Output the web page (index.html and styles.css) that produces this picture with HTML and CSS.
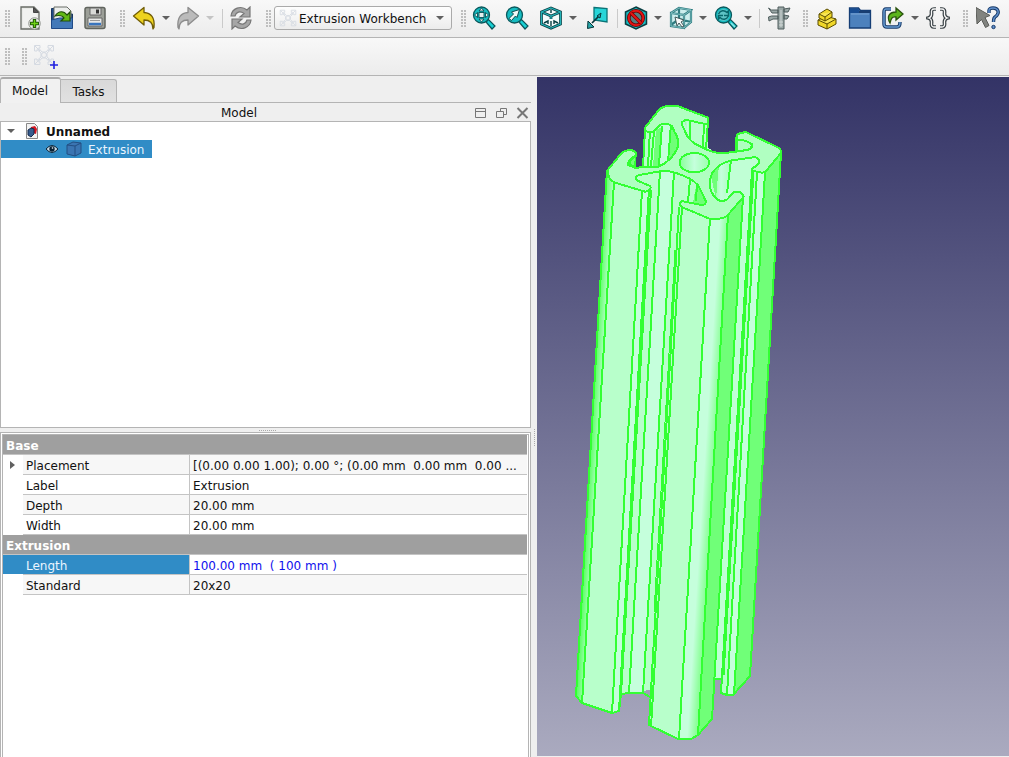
FILE: index.html
```html
<!DOCTYPE html>
<html lang="en">
<head>
<meta charset="utf-8">
<title>Extrusion Workbench</title>
<link rel="stylesheet" href="styles.css">
</head>
<body>
<div class="app">
<header class="toolbar main-bar">
  <i class="handle"></i>
  <svg class="icon" viewBox="0 0 24 24"><path d="M3 1h13l5 5v17H3z" fill="#e9eae7" stroke="#686c66" stroke-width="1.3"/><path d="M5 3h10l4 5v13H5z" fill="#f1f2f0"/><path d="M15.500 1.500v5h5z" fill="#555" stroke="#444"/><circle cx="16.500" cy="17.500" r="5.700" fill="#eef2eb" stroke="#888b85"/><path d="M16.500 13v9M12 17.500h9" stroke="#225d08" stroke-width="3.400"/><path d="M16.500 14v7M13 17.500h7" stroke="#70d316" stroke-width="1.300"/></svg>
  <svg class="icon" viewBox="0 0 24 24"><path d="M1.500 2.500h3V22H1.500z" fill="#204a87" stroke="#173761"/><path d="M20 8h2.500v6H20z" fill="#204a87" stroke="#173761"/><path d="M4 1h13l4 4v10H4z" fill="#eceeec" stroke="#686c66"/><path d="M1.500 14l8-2h13v10.500h-21z" fill="#4379b8" stroke="#204a87"/><path d="M5 10c4-6 9-5 12-1l3-3v9h-9l3-3c-2-3-5-3-9-2z" fill="#62b917" stroke="#204c0b" stroke-width="1.200"/></svg>
  <svg class="icon" viewBox="0 0 24 24"><rect x="2" y="1.500" width="20" height="21" rx="2" fill="#9c9f98" stroke="#60645e" stroke-width="1.500"/><path d="M7 2h11v7H7z" fill="#d9dad7" stroke="#666"/><path d="M13 3.500h3v4h-3z" fill="#333"/><path d="M5 12h14v8H5z" fill="#e8e9e7" stroke="#666"/><path d="M7 14.500h10" stroke="#999"/><path d="M6 18h12" stroke="#3975bd" stroke-width="2.500"/></svg>
  <i class="handle"></i>
  <svg class="icon" viewBox="0 0 24 24"><path d="M1.500 10L12 1.500v5c7 .5 11 5 10 15l-1 1.500c0-6-3-9-9-9v5z" fill="#edd21f" stroke="#715d05" stroke-width="1.300" stroke-linejoin="round"/></svg>
  <i class="drop"></i>
  <svg class="icon" viewBox="0 0 24 24"><path d="M22.500 10L12 1.500v5c-7 .5-11 5-10 15l1 1.500c0-6 3-9 9-9v5z" fill="#bbb" stroke="#8c8c8c" stroke-width="1.300" stroke-linejoin="round"/></svg>
  <i class="drop off"></i>
  <i class="sep"></i>
  <svg class="icon" viewBox="0 0 24 24"><g id="turn"><path d="M2 10c1-8 10-11 16-6l3-3v10H11l4-3.500C11 4.500 7 6 6 10z" fill="#a6a6a6" stroke="#777" stroke-width="1.200"/></g><use href="#turn" transform="rotate(180 12 12)"/></svg>
  <i class="handle"></i>
  <div class="combo"><svg width="18" height="18" viewBox="0 0 22 22"><use href="#profile"/></svg><span>Extrusion Workbench</span><i class="drop"></i></div>
  <i class="handle"></i>
  <svg class="icon" viewBox="0 0 24 24"><g id="lens"><path d="M14 16l2.500-2.500 6.500 6.500-3 3z" fill="#18d0d4" stroke="#0b555a" stroke-width="1.200"/><circle cx="9.500" cy="9" r="8" fill="#16bcc1" stroke="#0b585c" stroke-width="1.300"/></g><g fill="#e4f0ef" stroke="#0a4f54" stroke-width=".9"><path d="M9.500 2l2.500 3H7zM9.500 16L7 13h5zM2.500 9l3-2.500v5zM16.500 9l-3 2.500v-5z"/><rect x="7" y="6.500" width="5" height="5"/></g></svg>
  <svg class="icon" viewBox="0 0 24 24"><use href="#lens"/><path d="M4 12.500L8.500 8 6.500 6 14.500 3.500 12 11.500 10.500 10 6.500 14.500z" fill="#f3f8f7" stroke="#0b4b4e"/></svg>
  <svg class="icon" viewBox="0 0 24 24"><path d="M12 1l10.500 4.500v13L12 23 1.500 18.500v-13z" fill="#f3fbfb"/><path d="M12 2l9.500 4v12L12 22.200 2.500 18V6zM2.500 6L12 10l9.500-4M12 10v3" fill="none" stroke="#073e42" stroke-width="2.700"/><path d="M12 2l9.500 4v12L12 22.200 2.500 18V6zM2.500 6L12 10l9.500-4M12 10v3" fill="none" stroke="#24b3b8" stroke-width="1.200"/><path d="M12 4v3M12 15v5M5 17l4-2v3M19 17l-4-2v3" fill="none" stroke="#073e42" stroke-width="1.400"/></svg>
  <i class="drop"></i>
  <svg class="icon" viewBox="0 0 24 24"><path d="M9 1.500l13 1V16L9 14z" fill="#27d5d8" stroke="#0b7376" stroke-width="1.300"/><path d="M15 9l-8 8" stroke="#063539" fill="none" stroke-width="1.700"/><path d="M3 15l6 6-6.500 1.500zM12 10l4-3-1 5z" fill="#28a8ab" stroke="#063539"/></svg>
  <i class="sep"></i>
  <svg class="icon" viewBox="0 0 24 24"><path d="M12 1l10.500 5v12L12 23 1.500 18V6z" fill="#18bdc2" stroke="#093e42" stroke-width="1.500"/><circle cx="12" cy="12" r="7.200" fill="#548082" stroke="#6d0000" stroke-width="3.600"/><circle cx="12" cy="12" r="7.200" fill="none" stroke="#e41414" stroke-width="2"/><path d="M7 7l10 10" stroke="#6d0000" stroke-width="3.600"/><path d="M7 7l10 10" stroke="#e41414" stroke-width="2.200"/></svg>
  <i class="drop"></i>
  <svg class="icon" viewBox="0 0 24 24"><path d="M2 6l8-4 12 2v13l-7 6-13-3z" fill="#cdeeee"/><path d="M2 7l13 2v13L2 20zM2 7l8-5 12 2-7 5M22 4v12l-7 6M10 2v11l12 3M10 13l-8 6" fill="none" stroke="#2f7c80" stroke-width="2.200"/><path d="M2 7l13 2v13L2 20zM2 7l8-5 12 2-7 5M22 4v12l-7 6" fill="none" stroke="#83c2c4" stroke-width=".9"/><path d="M6 11l9 3-3 2 3 4-2 1-3-4-2 3z" fill="#fafafa" stroke="#42595a"/></svg>
  <i class="drop"></i>
  <svg class="icon" viewBox="0 0 24 24"><use href="#lens"/><circle cx="9.500" cy="9" r="6" fill="#5ec3c5"/><path d="M4.500 8c2-4 6-4 8.500-1.500L14.500 5v4.500H10M14.500 10c-2 4-6 4-8.500 1.500L4.500 13V9.500H9" stroke="#08676b" stroke-width="1.500" fill="none"/><path d="M17 17l4 4" stroke="#8ce4e5" stroke-width="1.500"/></svg>
  <i class="drop"></i>
  <i class="sep"></i>
  <svg class="icon" viewBox="0 0 24 24"><path d="M11 1h6v22h-6zM1.500 2l3 2H11v3H5zM1.500 11l3-1H11v3H6l-4 2zM17 3l6-1-2 4h-4zM17 9l5 1-2 3h-3z" fill="#9aa7a6" stroke="#4f5d5d"/><path d="M14 4v17M12 16h4M12 19h4" stroke="#d0d7d6"/></svg>
  <i class="handle"></i>
  <svg class="icon" viewBox="0 0 24 24"><g fill="#f0d729" stroke="#584b00" stroke-width="1" stroke-linejoin="round"><path d="M3 14l8-4 10 3v5l-9 5-9-4z"/><path d="M3 14l9 4 9-5M12 18v5" fill="#f8e655"/><path d="M4 8l8-5 5 3v5l-7 4-6-3z"/><path d="M4 8l6 3 7-5M10 11v4" fill="#f8e655"/></g></svg>
  <svg class="icon" viewBox="0 0 24 24"><path d="M1.500 2h9l2 2.500h10V22h-21z" fill="#4c81bd" stroke="#153e75" stroke-width="1.300"/><path d="M2 2.500h8l2 2.500v2H2z" fill="#184d92"/><path d="M11 5h11v2H11z" fill="#183e71"/><path d="M3 8h18" stroke="#7aa5d5"/></svg>
  <svg class="icon" viewBox="0 0 24 24"><path d="M10 3H5Q3 3 3 6v12q0 3 3 3h10q3 0 3-5" fill="none" stroke="#173a69" stroke-width="3.500"/><path d="M10 3H5Q3 3 3 6v12q0 3 3 3h10q3 0 3-5" fill="none" stroke="#6599cf" stroke-width="1.500"/><path d="M9 17c-4-7 0-11 6-11V2l7 6-7 6v-3c-4-1-5 2-6 6z" fill="#5cb51b" stroke="#28520c" stroke-width="1.300"/></svg>
  <i class="drop"></i>
  <svg class="icon" viewBox="0 0 24 24"><path d="M10 3H8Q5 3 5.500 7q.5 4-3 5 3.500 1 3 5-.5 4 2.500 4h2M14 3h2q3 0 2.500 4-.5 4 3 5-3.500 1-3 5 .5 4-2.500 4h-2" fill="none" stroke="#394145" stroke-width="3.700"/><path d="M10 3H8Q5 3 5.500 7q.5 4-3 5 3.500 1 3 5-.5 4 2.500 4h2M14 3h2q3 0 2.500 4-.5 4 3 5-3.500 1-3 5 .5 4-2.500 4h-2" fill="none" stroke="#f8f8f8" stroke-width="1.300"/></svg>
  <i class="handle"></i>
  <svg class="icon" viewBox="0 0 24 24"><path d="M0 1.500l14 8-5 2 4 8-3.500 2-4-8L1 18z" fill="#81837f" stroke="#5b5d59"/><path d="M13 7V4.500q0-2.500 4-2.500t5 3q1 3-3 6-1.500 1-1.500 5" fill="none" stroke="#173a69" stroke-width="3.400"/><path d="M13 7V4.500q0-2.500 4-2.500t5 3q1 3-3 6-1.500 1-1.500 5" fill="none" stroke="#608fca" stroke-width="1.500"/><circle cx="17.500" cy="21" r="1.700" fill="#608fca" stroke="#173a69"/></svg>
</header>
<div class="toolbar second-bar">
  <i class="handle"></i><i class="handle"></i>
  <svg class="profile-icon" width="28" height="28" viewBox="0 0 28 28"><g id="profile" fill="none" stroke="#d5dae2"><circle cx="11" cy="11" r="2.500"/><path d="M1.500 7V1.500H7V4H5.500L9 8h4l3.500-4H15V1.500h5.500V7H18V5.500L14 9v4l4 3.500V15h2.500v5.500H15V18h1.500L13 14H9l-3.500 4H7v2.500H1.500V15H4v1.500L8 13V9L4 5.500V7zM2 2l5 5M20 2l-5 5M2 20l5-5M20 20l-5-5"/></g><path d="M21 17v8M17 21h8" stroke="#2020df" stroke-width="1.600"/></svg>
</div>
<main class="workspace">
  <aside class="panel">
    <nav class="tabs"><span class="tab active">Model</span><span class="tab">Tasks</span></nav>
    <div class="dock-title"><span>Model</span>
      <svg width="54" height="12" viewBox="0 0 54 12" fill="none" stroke="#777"><path d="M.5 1.500h10v9H.5zM.5 4.500h10"/><path d="M25.500 4.500v-3h6v6h-3M21.500 4.500h7v6h-7z"/><path d="M42.500 1l10 10M52.500 1l-10 10" stroke-width="2"/></svg>
    </div>
    <section class="tree">
      <div class="document"><i class="drop"></i><svg width="14" height="16" viewBox="0 0 14 16"><path d="M1.500.5h8l3 3v12h-11z" fill="#f2f2f2" stroke="#888"/><path d="M6 4l4-1 2 3-1 5-5-2z" fill="#d41520"/><path d="M3 7l3-2 3 1v5l-3 3-3-2z" fill="#375d8e" stroke="#172b4c"/></svg><b>Unnamed</b></div>
      <div class="feature"><svg width="14" height="10" viewBox="0 0 14 10"><path d="M1 5q6-7 12 0-6 7-12 0z" fill="#c8dce8" stroke="#082236"/><circle cx="7" cy="5" r="2.700" fill="#082236"/><circle cx="7.500" cy="4" r=".8" fill="#fff"/></svg><svg width="16" height="16" viewBox="0 0 16 16"><path d="M1 4l6-3 8 1v10l-6 3-8-2z" fill="#3b75b2" stroke="#234f82"/><path d="M1 4l8 1 6-3M9 5v10" fill="none" stroke="#234f82"/></svg><span>Extrusion</span></div>
    </section>
    <div class="splitter"><i></i></div>
    <section class="properties">
      <div class="grid">
        <div class="group">Base</div>
        <div class="row alt"><i class="branch"></i><span class="key">Placement</span><span class="value">[(0.00 0.00 1.00); 0.00 °; (0.00 mm&nbsp; 0.00 mm&nbsp; 0.00 ...</span></div>
        <div class="row"><span class="key">Label</span><span class="value">Extrusion</span></div>
        <div class="row alt"><span class="key">Depth</span><span class="value">20.00 mm</span></div>
        <div class="row"><span class="key">Width</span><span class="value">20.00 mm</span></div>
        <div class="group">Extrusion</div>
        <div class="row selected"><span class="key">Length</span><span class="value">100.00 mm&nbsp; ( 100 mm )</span></div>
        <div class="row alt"><span class="key">Standard</span><span class="value">20x20</span></div>
      </div>
    </section>
  </aside>
  <div class="divider"><i></i></div>
  <section class="viewport">
    <svg class="model" width="472" height="679" viewBox="537 77 472 679" shape-rendering="crispEdges">
      <defs>
        <linearGradient id="bend"><stop offset="0" stop-color="#7dff88"/><stop offset=".5" stop-color="#c5ffdc"/><stop offset="1" stop-color="#a5ffb7"/></linearGradient>
        <linearGradient id="bore"><stop offset="0" stop-color="#87ff99"/><stop offset=".5" stop-color="#c5ffdc"/><stop offset="1" stop-color="#9dffae"/></linearGradient>
        <linearGradient id="round" gradientUnits="userSpaceOnUse" x1="698" y1="400" x2="717" y2="401.200"><stop offset=".55" stop-color="#c5ffdc"/><stop offset="1" stop-color="#8cff99"/></linearGradient>
        <linearGradient id="side" gradientUnits="userSpaceOnUse" x1="593" y1="400" x2="602" y2="400.500"><stop stop-color="#58ff60"/><stop offset="1" stop-color="#b8ffcb"/></linearGradient>
      </defs>
      <path d="M645 128L643 167 650 178 725 158 708 148 708 120 680 116z" fill="#b8ffcb"/>
      <path d="M656 130l15-8 10 21-12 22-16 1z" fill="#70ff78"/><path d="M662 123h8l-2 42-8 2z" fill="#c5ffdc"/>
      <path d="M684 121l7 2-1 15z" fill="url(#bend)"/>
      <path d="M632 170L620 694l9-1L715 680 740 160 700 180 675 168z" fill="#b8ffcb"/>
      <path d="M607 170L576 696 582 703 612 713 619 711 621 694 651 188z" fill="#b8ffcb"/>
      <path d="M607 170L576 696 582 703 614 182z" fill="url(#side)"/>
      <path d="M642 191L612 713 619 711 649 188z" fill="#c5ffdc"/>
      <path d="M660 169L629 693h14L674 169z" fill="#c5ffdc"/>
      <path d="M697 180l13 25-17-2z" fill="#70ff78"/>
      <path d="M728 160L722 190 715 679h7l30-508 20-14h-35z" fill="#c0ffd5"/>
      <path d="M736 137v18l16 2v-16z" fill="#b8ffcb"/>
      <path d="M710 172l9-12 13-4-6 40-9 7z" fill="url(#bend)"/><path d="M710 172l9-8-3 35z" fill="#70ff78"/>
      <path d="M752 171L721 694h12L765 173z" fill="#b5ffca"/>
      <path d="M757 173L727 695h6L765 173z" fill="#c5ffdc"/>
      <path d="M765 173L733 695 750 676 781 153z" fill="#70ff78"/>
      <path d="M680 205L649 725 678 739 691 739 698 735 728 215z" fill="#b8ffcb"/>
      <path d="M710 218L679 739h12l7-4L728 215z" fill="url(#round)"/>
      <path d="M728 215L698 735 712 719 743 197z" fill="#70ff78"/>
      <g class="edges">
        <path d="M607 170L576 696 582 703 612 713 619 711 621 694 629 693h14l7 4M614 182L582 703M642 191L612 713M649 189L619 711M651 190L621 694M660 171L629 693M674 172L643 693M679 207L649 725 678 739h13l7-4 14-16 31-522M682 207L651 727M710 218L679 739M728 215L698 735M715 679h7M752 171L721 693l6 2h6l17-19 31-523M757 173L727 695M765 173L734 695"/>
        <path d="M753 171L723 675" stroke-width="3"/><path d="M675 250L654 612" stroke-width="1"/>
        <path d="M645 130L643 167M650 131L648 166M654 131L651 166M662 126L659 165M671 124L668 162M708 121L706 149M704 122L703 148M690 122v18M731 160L727 193M690 180L688 201M697 183L696 201M736 137v16M632 153v12"/>
      </g>
      <g transform="translate(590 90) scale(.33333)">
        <path d="M165 113L208 58Q220 48 235 48H262L355 83V97Q352 103 345 102L300 92Q276 87 275 102L290 135Q305 160 327 167Q350 181 370 186Q400 194 420 187L475 180Q492 172 485 162Q467 150 440 148V135Q450 127 470 127L565 173Q576 180 572 190L528 243Q522 250 510 247L487 242Q483 235 495 230Q508 223 508 212Q503 199 484 203L425 211Q385 220 366 250Q359 266 359 288Q368 329 397 334L412 328 430 307Q455 300 461 320L418 370Q407 385 387 386H358L275 351Q264 342 275 333L333 345Q350 345 347 332L325 287Q305 263 255 248Q230 241 210 244L148 255Q130 260 142 272L181 288Q186 302 165 305L72 277Q53 267 53 240L95 189Q105 179 127 181Q141 187 138 197L128 202Q112 215 115 225L135 233 205 230Q245 213 262 175Q270 150 254 127L246 108Q235 99 210 104L188 126Q165 130 165 113Z" fill="#b0ffc1" stroke="#33ff33" stroke-width="6"/>
        <ellipse cx="313" cy="218" rx="44" ry="29" fill="url(#bore)" stroke="#33ff33" stroke-width="6"/>
        <path d="M440 150q35 0 45 15l-5 12-38 7z" fill="#b0ffc1" stroke="#33ff33" stroke-width="5"/>
        <path d="M137 195l-22 25 20 12z" fill="#70ff78" stroke="#33ff33" stroke-width="5"/>
        <path d="M120 213v18" stroke="#33ff33" stroke-width="4"/>
      </g>
    </svg>
  </section>
</main>
</div>
</body>
</html>
```

FILE: styles.css
```css
* { box-sizing: border-box; }
body { margin: 0; background: #efefef; color: #111; font: 12px/18px "DejaVu Sans", sans-serif; }
.app { display: flex; flex-direction: column; width: 1009px; height: 757px; overflow: hidden; }
.toolbar { flex: none; background: linear-gradient(#f8f8f8, #ececec); border-bottom: 1px solid #b4b4b4; align-items: center; height: 38px; }
.main-bar { display: grid; height: 38px; padding-bottom: 1px; grid-template-columns: 14px 32px 32px 34px 20px 24px 20px 24px 20px 4px 34px 20px 174px 22px 20px 46px 22px 22px 26px 14px 24px 20px 26px 18px 28px 16px 6px 34px 18px 26px 40px 26px 18px 28px 26px 20px; justify-items: center; }
.icon { width: 24px; height: 24px; }
.handle { width: 5px; height: 17px; background: radial-gradient(circle at 1px 1px, #bdbdbd .7px, transparent 1px) 0 0 / 3px 3px; }
.drop { width: 0; height: 0; border: 4px solid transparent; border-top-color: #606060; border-bottom: 0; }
.drop.off { border-top-color: #c4c4c4; }
.sep { width: 1px; height: 19px; background: #cacaca; }
.combo { width: 178px; height: 24px; margin-left: -4px; padding: 0 7px 0 4px; border: 1px solid #aaa; border-radius: 3px; background: linear-gradient(#fefefe, #ececec); display: flex; align-items: center; gap: 2px; white-space: nowrap; }
.combo span { padding-top: 1px; }
.combo .drop { margin-left: auto; }
.second-bar { display: flex; padding-left: 5px; gap: 12px; }
.profile-icon { margin-left: -6px; margin-top: 3px; }
.workspace { display: flex; flex: 1; min-height: 0; padding-top: 1px; }
.panel { display: flex; flex-direction: column; width: 531px; }
.tabs { display: flex; align-items: flex-end; height: 26px; flex: none; border-bottom: 1px solid #b4b4b4; }
.tab { height: 23px; width: 56px; text-align: center; line-height: 25px; border: 1px solid #b4b4b4; border-left: 0; border-radius: 0 3px 0 0; background: linear-gradient(#d9d9d9, #e1e1e1); border-bottom: 0; }
.tab.active { width: 61px; height: 26px; line-height: 24px; margin-bottom: -1px; padding-right: 1px; border-left: 1px solid #b4b4b4; border-top: 2px solid #aaa; border-radius: 3px 3px 0 0; background: #f1f1f1; }
.dock-title { flex: none; height: 18px; display: grid; grid-template-columns: 478px 53px; align-items: center; line-height: 18px; }
.dock-title span { text-align: center; padding-top: 1px; }
.dock-title svg { margin-left: -3px; }
.tree { flex: none; height: 307px; border: 1px solid #b4b4b4; background: #fff; }
.document { display: flex; height: 18px; align-items: center; padding-left: 6px; }
.document svg { margin-left: 10px; }
.document b { margin-left: 7px; padding-top: 2px; }
.feature { display: flex; align-items: center; width: 151px; height: 18px; padding-left: 44px; color: #eaf5ff; background: #308cc6; white-space: nowrap; }
.feature svg + svg { margin-left: 7px; }
.feature span { margin-left: 6px; padding-top: 1px; }
.splitter { flex: none; height: 4px; display: flex; justify-content: center; align-items: center; }
.splitter i { width: 17px; margin-left: 4px; border-top: 1px dotted #aaa; }
.properties { flex: 1; border: 1px solid #b4b4b4; background: #fff; padding: 1px; min-height: 0; border-bottom: 0; padding-bottom: 0; }
.grid { height: 100%; border: 1px solid #b4b4b4; border-bottom: 0; }
.group { height: 20px; padding-left: 3px; line-height: 22px; color: #fff; background: #9f9f9f; border-bottom: 1px solid #c4c4c4; font-weight: bold; }
.row { position: relative; height: 20px; display: grid; grid-template-columns: 167px 1fr; margin-left: 20px; border-bottom: 1px solid #c4c4c4; line-height: 22px; white-space: nowrap; }
.group, .row { margin-right: 1px; }
.key { height: 19px; padding-left: 3px; border-right: 1px solid #c4c4c4; }
.value { height: 19px; padding-left: 3px; }
.alt { background: #f7f7f7; }
.selected .key { margin-left: -20px; padding-left: 23px; color: #eaf5ff; background: #308cc6; }
.selected .value { color: #1010ed; }
.branch { position: absolute; left: -13px; top: 6px; border: 4px solid transparent; border-left: 5px solid #606060; border-right: 0; }
.divider { width: 6px; display: flex; justify-content: center; align-items: center; }
.divider i { height: 17px; margin-top: 40px; border-left: 1px dotted #aaa; }
.viewport { width: 472px; height: 679px; background: linear-gradient(#333366, #aaaabf); }
.model { display: block; }
.edges { fill: none; stroke: #33ff33; stroke-width: 2; }
```
